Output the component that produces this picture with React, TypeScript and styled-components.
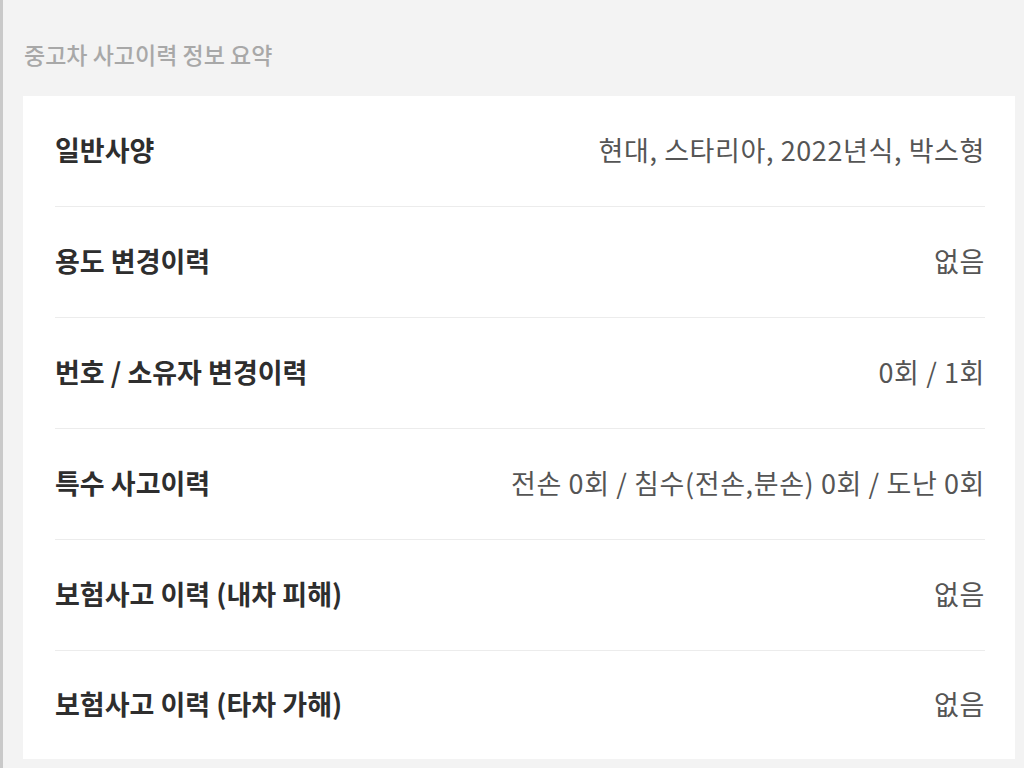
import React from 'react'
import styled, { createGlobalStyle } from 'styled-components'

const GlobalStyle = createGlobalStyle`
  html, body {
    margin: 0;
    padding: 0;
    background: #f3f3f3;
  }
  body {
    font-family: 'Noto Sans CJK KR', 'Noto Sans', sans-serif;
  }
`

const Page = styled.div`
  min-height: 768px;
  box-sizing: border-box;
  border-left: 3px solid #c9c9c9;
  padding: 38px 9px 10px 20px;
`

const Title = styled.h2`
  margin: 0 0 26px 1px;
  font-size: 23px;
  line-height: 32px;
  font-weight: 500;
  color: #a8a8a8;
  letter-spacing: 0;
`

const Card = styled.div`
  background: #ffffff;
  padding: 0 30px 0 32px;
`

const Row = styled.div<{ $last?: boolean }>`
  display: flex;
  align-items: center;
  justify-content: space-between;
  box-sizing: border-box;
  padding-bottom: 4px;
  height: ${({ $last }) => ($last ? '108px' : '111px')};
  border-bottom: ${({ $last }) => ($last ? 'none' : '1px solid #ececec')};
`

const Label = styled.span`
  font-size: 27px;
  font-weight: 700;
  color: #2e2e2e;
  letter-spacing: 0;
`

const Value = styled.span`
  font-size: 27px;
  font-weight: 400;
  color: #555555;
  letter-spacing: 0.6px;
`

const rows = [
  { label: '일반사양', value: '현대, 스타리아, 2022년식, 박스형' },
  { label: '용도 변경이력', value: '없음' },
  { label: '번호 / 소유자 변경이력', value: '0회 / 1회' },
  { label: '특수 사고이력', value: '전손 0회 / 침수(전손,분손) 0회 / 도난 0회' },
  { label: '보험사고 이력 (내차 피해)', value: '없음' },
  { label: '보험사고 이력 (타차 가해)', value: '없음' },
]

export default function App() {
  return (
    <>
      <GlobalStyle />
      <Page>
        <Title>중고차 사고이력 정보 요약</Title>
        <Card>
          {rows.map((r, i) => (
            <Row key={r.label} $last={i === rows.length - 1}>
              <Label>{r.label}</Label>
              <Value>{r.value}</Value>
            </Row>
          ))}
        </Card>
      </Page>
    </>
  )
}
